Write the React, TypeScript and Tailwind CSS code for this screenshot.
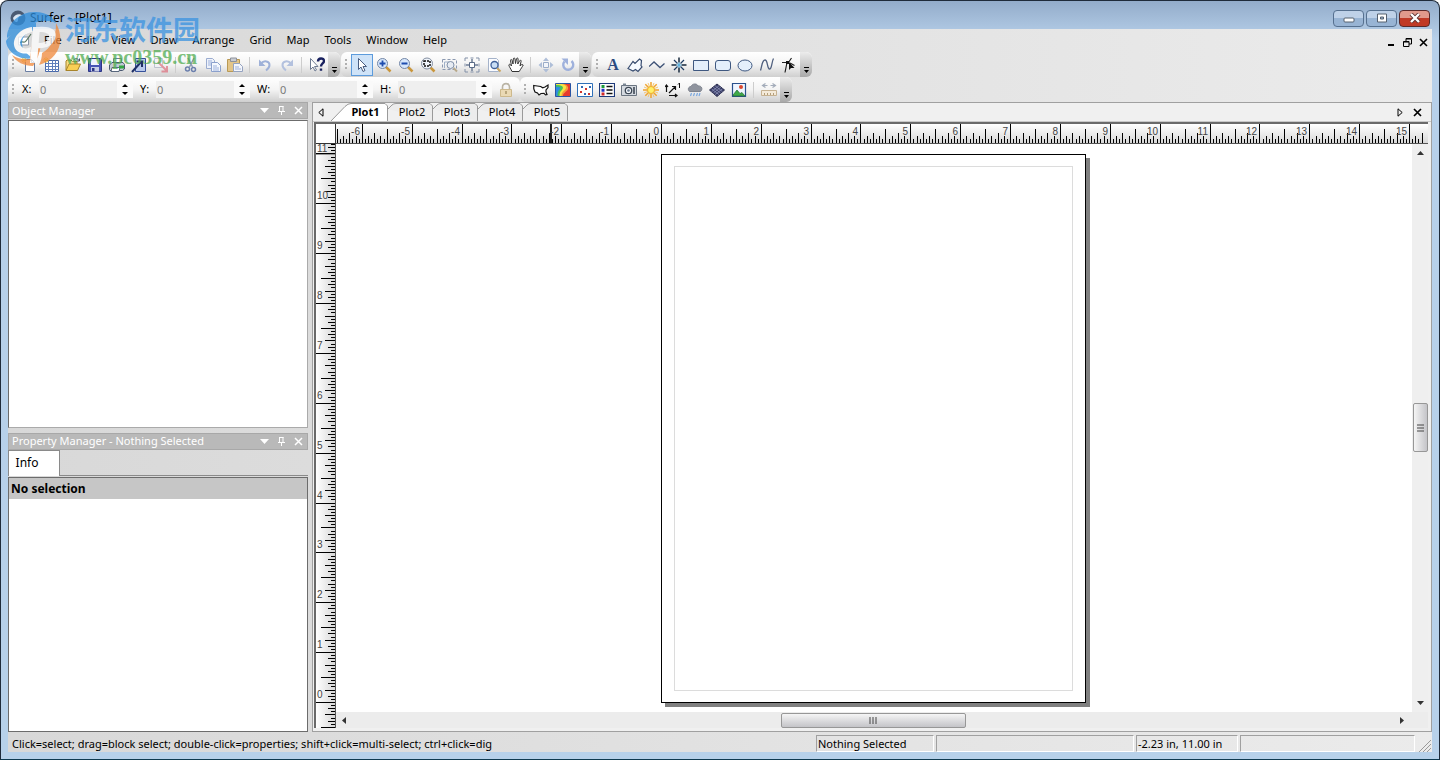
import React from "react";

type IconProps = { children: React.ReactNode; className?: string };

function Icon({ children, className = "" }: IconProps) {
  return (
    <svg viewBox="0 0 16 16" className={`h-4 w-4 shrink-0 ${className}`} fill="none" aria-hidden="true">
      {children}
    </svg>
  );
}

/* ---------- toolbar icons ---------- */
const icons: Record<string, React.ReactNode> = {
  New: (
    <>
      <path d="M4.5 2.5h6l3 3v9h-9z" fill="#fdfdff" stroke="#6b7fa3" />
      <path d="M10.5 2.5v3h3" stroke="#6b7fa3" />
      <path d="M3 0v6M0 3h6M1 1l4 4M5 1L1 5" stroke="#f0d76a" />
    </>
  ),
  Worksheet: (
    <>
      <path d="M2.5 3.5h13v11h-13z" fill="#fff" stroke="#4868a8" />
      <path d="M2.500 6.500h13M2.500 9.500h13M2.500 12.500h13M5.500 3.500v11M9.500 3.500v11M12.500 3.500v11" stroke="#5f7fbc" />
      <path d="M3 0v6M0 3h6M1 1l4 4M5 1L1 5" stroke="#f0d76a" />
    </>
  ),
  Open: (
    <>
      <path d="M1 13.500V4l1-1h4l1.500 1.500H12V7" fill="#f6dc83" stroke="#a8842a" />
      <path d="M1 13.500L4 7h11.500l-3 6.500z" fill="#f9cf55" stroke="#a8842a" />
      <path d="M9 2.500c2-1.500 4-1 5 1m.5-2v2.500H12" stroke="#44506a" />
    </>
  ),
  Save: (
    <>
      <path d="M1.500 1.500h12l1 1v12h-13z" fill="#4753b5" stroke="#2c3685" />
      <path d="M4 2h8v6H4z" fill="#eef2ff" />
      <path d="M4 10h8v4.500H4z" fill="#c7cde6" />
      <path d="M5 11h2.500v3H5z" fill="#2c3685" />
    </>
  ),
  Print: (
    <>
      <path d="M4.500 6V1.500h8V6" fill="#fff" stroke="#6d7c93" />
      <path d="M3 5.500h11l1.500 2v4.500l-2 1.500H1l-.500-1V8z" fill="#c3cad5" stroke="#4a5870" />
      <path d="M3 10.500h8l-1 4H2z" fill="#fff" stroke="#59677d" />
      <path d="M10 8.500h5v3h-5z" fill="#35a843" />
    </>
  ),
  Import: (
    <>
      <path d="M4.500 1.500h10v13h-10z" fill="#b9c9ec" stroke="#35509a" />
      <path d="M1 15l9-10M5.500 4.500h5.500V10" stroke="#1f2f66" strokeWidth="2" />
    </>
  ),
  Export: (
    <g opacity=".6">
      <path d="M1.500 1.500h8v9h-8z" fill="#f4f4f8" stroke="#9ba6bb" />
      <path d="M5 5l9 9M14 9v5.500H8.500" stroke="#dd5a6c" strokeWidth="2" />
    </g>
  ),
  Cut: (
    <>
      <path d="M5 1l4.500 9M11 1L6.500 10" stroke="#8c9ab4" strokeWidth="1.500" />
      <circle cx="4.500" cy="12" r="2" stroke="#6c80ad" strokeWidth="1.500" />
      <circle cx="10.500" cy="12.500" r="2" stroke="#6c80ad" strokeWidth="1.500" />
    </>
  ),
  Copy: (
    <>
      <path d="M1.500 1.500h6l2 2v8h-8z" fill="#eef2fa" stroke="#9bacd0" />
      <path d="M6.500 5.500h6l3 3v6h-9z" fill="#f5f8fd" stroke="#8ba0cc" />
      <path d="M3 4h4M3 6h3M3 8h3M8 9h4M8 11h6M8 13h6" stroke="#9db1dd" />
    </>
  ),
  Paste: (
    <>
      <path d="M.5 2.500h12v12H.5z" fill="#e3c588" stroke="#b99954" />
      <path d="M3.500 1h6v3.500h-6z" fill="#c9ccd3" stroke="#8e929b" />
      <path d="M6.500 6.500h6l3 3v5h-9z" fill="#f4f6fb" stroke="#95a3c0" />
      <path d="M8 10h4M8 12h6" stroke="#9db1dd" />
    </>
  ),
  Undo: (
    <>
      <path d="M4 6.500C7 3 12.500 4 12.500 8c0 2.500-1.500 4-3.500 5.500" stroke="#9fb1d8" strokeWidth="2" />
      <path d="M2 2.500v6.500h6.500z" fill="#9fb1d8" />
    </>
  ),
  Redo: (
    <>
      <path d="M12 6.500C9 3 3.500 4 3.500 8c0 2.500 1.500 4 3.500 5.500" stroke="#b3c1de" strokeWidth="2" />
      <path d="M14 2.500v6.500H7.500z" fill="#b3c1de" />
    </>
  ),
  "Context help": (
    <>
      <path d="M1.500 1.500v11l2.500-2.500 2 4 1.500-1-2-3.500h3.500z" fill="#fff" stroke="#6f7b92" />
      <path d="M9 4.500c0-4 6-4 6-.5 0 2.500-3 2.500-3 5.500M12 11.500v2.300" stroke="#19215f" strokeWidth="2.400" />
    </>
  ),
  Select: <path d="M4.500 1.500v11l2.500-2.500 2 4.500 2-1-2-4h3.500z" fill="#fff" stroke="#4a5d80" />,
  "Zoom in": (
    <>
      <path d="M10 10l4.500 4.500" stroke="#c9963c" strokeWidth="2.500" />
      <circle cx="6.500" cy="6.500" r="5" fill="#d7e7fb" stroke="#7386a6" />
      <path d="M3.500 6.500h6M6.500 3.500v6" stroke="#1d4cae" strokeWidth="1.800" />
    </>
  ),
  "Zoom out": (
    <>
      <path d="M10 10l4.500 4.500" stroke="#c9963c" strokeWidth="2.500" />
      <circle cx="6.500" cy="6.500" r="5" fill="#d7e7fb" stroke="#7386a6" />
      <path d="M3.500 6.500h6" stroke="#1d4cae" strokeWidth="1.800" />
    </>
  ),
  "Zoom rectangle": (
    <>
      <path d="M10.500 10.500l4 4" stroke="#c9963c" strokeWidth="2.500" />
      <circle cx="7" cy="6.500" r="5.500" fill="#eef3fa" stroke="#8590a2" />
      <path d="M4 4h6v5H4z" stroke="#111" strokeWidth="1.500" strokeDasharray="2 1" />
    </>
  ),
  "Zoom selected": (
    <>
      <path d="M.5 2.500h14v10H.5z" stroke="#8b99b0" strokeDasharray="3 2" />
      <path d="M2.500 5V11M2.500 5h5" stroke="#9fb0c8" />
      <path d="M11.500 11l3.500 3.500" stroke="#b8a98a" strokeWidth="2" />
      <circle cx="8.500" cy="8" r="3.500" fill="#e7ecf3" stroke="#8090a8" />
    </>
  ),
  "Fit to window": (
    <>
      <path d="M1 4V1h3M6.500 1h3M12 1h3v3M15 6.500v3M15 12v3h-3M9.500 15h-3M4 15H1v-3M1 9.500v-3" stroke="#8391a8" />
      <path d="M5.500 5.500h5v5h-5z" fill="#fff" stroke="#5a6b87" />
      <path d="M8 2v3M8 11v3M2 8h3M11 8h3" stroke="#6d7c95" strokeWidth="1.500" />
    </>
  ),
  "Zoom page": (
    <>
      <path d="M2.500 1.500h8l2 2v11h-10z" fill="#fbfcff" stroke="#a5b3ca" />
      <path d="M11 11l3.500 3.500" stroke="#c9a560" strokeWidth="2" />
      <circle cx="8.500" cy="8" r="3.500" fill="#c9def6" stroke="#3f6098" strokeWidth="1.300" />
    </>
  ),
  Pan: (
    <path
      d="M4 14.500C3 12 1 9.500.8 8c.4-1.200 1.700-.8 2.700 1L2.500 3.500c0-1.300 1.300-1.300 1.600 0L5 7 5.300 2c.2-1.300 1.600-1.300 1.700 0L7.500 6.500 8.500 1.800c.3-1.200 1.600-1 1.600.2L9.800 7l1.800-3.200c.6-1.100 1.800-.6 1.500.5L12 9c.8-1.300 2.600-2 3.200-1-.6 1.500-2.500 4-4 6.500z"
      fill="#fff"
      stroke="#333"
    />
  ),
  Move: (
    <>
      <path d="M8 .5l3 3.500H5zM8 15.500L5 12h6zM.5 8L4 5v6zM15.500 8L12 5v6z" fill="#aebed8" />
      <path d="M5.500 5.500h5v5h-5z" fill="#f2f5fa" stroke="#9aacc8" />
    </>
  ),
  Rotate: (
    <>
      <path d="M11.500 4a5 5 0 1 1-7 .5" stroke="#9fb1dc" strokeWidth="2.400" />
      <path d="M1.500 1.500H8v6.500z" fill="#9fb1dc" />
    </>
  ),
  Polygon: <path d="M1 11.500l5-7 2 2L12.500 2l2 1.500-.5 5 1 1.500-4 4.500-2.500-2L6 14l-3-1.500z" fill="#f6faff" stroke="#394d70" strokeWidth="1.200" />,
  Polyline: <path d="M0 9.500l5-4.500 6 5.500 4.500-4" stroke="#3f5377" strokeWidth="1.300" />,
  Symbol: (
    <>
      <path d="M8 .5v5M8 10.500v5M.5 8h5M10.500 8h5" stroke="#17283c" strokeWidth="1.500" />
      <path d="M3 3l3.500 3.500M9.500 9.500L13 13M13 3L9.500 6.500M6.500 9.500L3 13" stroke="#1d3c62" strokeWidth="1.200" />
      <path d="M8 5.500v5M5.500 8h5" stroke="#3aa0d8" strokeWidth="1.200" />
    </>
  ),
  Rectangle: <path d="M.5 3.500h15v10H.5z" fill="#e4effb" stroke="#3f5880" />,
  "Rounded rectangle": <rect x=".5" y="3.500" width="15" height="10" rx="2.500" fill="#e4effb" stroke="#3f5880" />,
  Ellipse: <ellipse cx="8" cy="8.500" rx="7" ry="5.500" fill="#e4effb" stroke="#3f5880" />,
  Spline: <path d="M1.500 13.500C3 9 3 3 6 3s2 9 4.500 9S12.500 5 14.500 1.500" stroke="#50607f" strokeWidth="1.300" />,
  Reshape: (
    <>
      <path d="M1 5.500h6.500L10.500 1M6 5.500l-2 10M9 6l4.500 2.500" stroke="#222" strokeWidth="1.200" />
      <path d="M5 4h3v3H5z" fill="#111" />
      <path d="M8 5v8l2-2h3.500z" fill="#111" />
    </>
  ),
  "Lock aspect": (
    <>
      <path d="M4.500 7V5c0-4.500 7-4.500 7 0v2" stroke="#b9b3a4" strokeWidth="1.600" />
      <path d="M2.500 7.500h11v7h-11z" fill="#ead9b4" stroke="#cdb98c" />
      <path d="M8 9v3" stroke="#a8956a" strokeWidth="1.500" />
    </>
  ),
  "Base map": (
    <path d="M.7 3.500l7 1 2 1.300 2.300-.8 3-2V5.500l-2 2.500v2l1 2.500-1.500.3-1.500-1.500-3 .2L6 13l-1.500-2L2 10 .8 7z" fill="#fff" stroke="#111" strokeWidth="1.200" />
  ),
  "Contour map": (
    <>
      <path d="M.5 1.500h15v13H.5z" fill="#e83b2e" stroke="#2a55a4" />
      <path d="M1 2h8c4 1 5 4 3.500 6S8 11 8 14H1z" fill="#f79a3a" />
      <path d="M1 2h6c4 1 5 3 3.500 5S6.500 10 6.500 14H1z" fill="#f4e443" />
      <path d="M1 3c6 0 8 2 6.500 4S4.500 10 4.500 14H1z" fill="#46c05d" />
      <path d="M1 5c4-1 5 1 3.500 2.500S2.500 11 2.500 14H1z" fill="#2d8de0" />
    </>
  ),
  "Post map": (
    <>
      <path d="M.5 1.500h15v13H.5z" fill="#fff" stroke="#2f70b8" />
      <path d="M3 9h2v2H3zM8 6h2v2H8zM11 11h2v2h-2z" fill="#d0342c" />
      <path d="M4 4h2v2H4zM12 4h2v2h-2zM7 11h2v2H7z" fill="#3268b4" />
    </>
  ),
  "Classed post map": (
    <>
      <path d="M.5 1.500h15v13H.5z" fill="#fff" stroke="#1e3a7a" strokeWidth="1.200" />
      <path d="M2.500 3h3v3h-3z" fill="#1c9b3b" />
      <path d="M2.500 6.700h3v3h-3z" fill="#2030c0" />
      <path d="M2.500 10.400h3v3h-3z" fill="#d02a2a" />
      <path d="M7.500 4.500h6M7.500 8h6M7.500 11.500h6" stroke="#111" strokeWidth="1.300" />
    </>
  ),
  "Image map": (
    <>
      <path d="M.5 3.500h15v10H.5z" fill="#d5dae0" stroke="#6a7480" />
      <path d="M2 1.500h3v2H2z" fill="#7b8794" />
      <circle cx="7.500" cy="8.500" r="3.200" fill="#f3f6fa" stroke="#3c4754" strokeWidth="1.300" />
      <circle cx="7.500" cy="8.500" r="1.300" fill="#6a7b90" />
      <path d="M13 5v7" stroke="#333e4c" strokeWidth="1.500" />
    </>
  ),
  "Shaded relief map": (
    <>
      <path d="M8 0v16M0 8h16M2.300 2.300l11.400 11.400M13.700 2.300L2.300 13.700" stroke="#f0a32c" strokeWidth="1.500" />
      <path d="M5 1l6 14M11 1L5 15M1 5l14 6M15 5L1 11" stroke="#f5bb4f" strokeWidth=".8" />
      <circle cx="8" cy="8" r="3.500" fill="#fff06a" stroke="#eeb02f" />
    </>
  ),
  "Vector map": (
    <>
      <path d="M1.500 3v7M0 5l1.500-2L3 5M4 11l6.500-6.500M7 4.500h3.500V8M4 13.500h8M10 12l2 1.500-2 1.500" stroke="#111" strokeWidth="1.200" />
      <path d="M13 2.500L14.500 1v5" stroke="#111" />
    </>
  ),
  "Watershed map": (
    <>
      <path d="M2.500 9.500C0 7 2 4.500 4 4.500 5 1.500 10 1 11 4c4-.5 5 3.500 2.500 5.500z" fill="#8f949e" stroke="#7e838e" />
      <path d="M4.500 11l-1 3M7.500 11l-1 3M10.500 11l-1 3M13 11l-1 3" stroke="#79a7df" strokeWidth="1.200" />
    </>
  ),
  "3D surface": (
    <>
      <path d="M8 2l7.500 6L8 14.500.5 8z" fill="#3a3f68" stroke="#2a2d4d" />
      <path d="M6 3.700l7.500 6M4.200 5.200l7.500 6M2.500 6.700l7.500 6M10 3.700l-7.500 6M11.800 5.200l-7.500 6M13.500 6.700l-7.500 6" stroke="#9297bd" strokeWidth=".7" />
    </>
  ),
  "3D wireframe": (
    <>
      <path d="M1.500 1.500h13v13h-13z" fill="#eef5ff" stroke="#29508c" strokeWidth="1.200" />
      <path d="M2 13l4-5 3 3.500 2-1 3 3.500H2z" fill="#3eaa48" stroke="#256c35" strokeWidth=".7" />
      <circle cx="10" cy="5" r="2" fill="#d9472f" />
    </>
  ),
  "Scale bar": (
    <>
      <path d="M2 3.500h4.500M9.500 3.500H14M4.500 1.500l-3 2 3 2M11.500 1.500l3 2-3 2" stroke="#a3acba" strokeWidth="1.200" />
      <path d="M.5 8.500h15v5H.5z" fill="#f4ead9" stroke="#c6b292" />
      <path d="M3.500 11v2M6.500 11v2M9.500 11v2M12.500 11v2" stroke="#b49e7a" />
    </>
  ),
};

function Tool({ name, active = false }: { name: string; active?: boolean }) {
  return (
    <button
      type="button"
      aria-label={name}
      className={
        active
          ? "flex h-[22px] w-[22px] shrink-0 items-center justify-center border border-[#5c9bdc] bg-[#cfe3f8]"
          : "flex h-[22px] w-[22px] shrink-0 items-center justify-center"
      }
    >
      {name === "Text" ? (
        <span className="font-['Liberation_Serif',serif] text-base leading-4 font-bold text-[#2c4a80]">A</span>
      ) : (
        <Icon>{icons[name]}</Icon>
      )}
    </button>
  );
}

function Grip() {
  return (
    <div className="flex w-[10px] shrink-0 justify-center">
      <svg viewBox="0 0 6 16" className="h-4 w-[6px]" aria-hidden="true">
        <path d="M2 2h2v2H2zM2 6h2v2H2zM2 10h2v2H2z" fill="#b0b0b0" />
      </svg>
    </div>
  );
}

function Separator() {
  return <div className="mr-1 ml-[3px] h-4 w-px shrink-0 bg-[#cdcdcd]" />;
}

function Overflow() {
  return (
    <button
      type="button"
      aria-label="Toolbar options"
      className="flex h-full w-3 shrink-0 items-end justify-center rounded-r-md bg-linear-to-b from-[#ececec] to-[#a9a9a9] pb-[3px]"
    >
      <svg viewBox="0 0 7 7" className="h-[7px] w-[7px]" aria-hidden="true">
        <path d="M1 0h5v1H1zM1 3h5L3.500 6z" fill="#000" />
      </svg>
    </button>
  );
}

function Strip({ label, children }: { label: string; children: React.ReactNode }) {
  return (
    <div
      role="toolbar"
      aria-label={label}
      className="flex h-[25px] items-center rounded-md bg-linear-to-b from-white via-[#f4f4f4] to-[#cfcfcf]"
    >
      {children}
    </div>
  );
}

const coordLabelBox: Record<string, string> = {
  X: "w-[21px] pl-1",
  Y: "w-[23px] pl-[7px]",
  W: "w-[29px] pl-[7px]",
  H: "w-[25px] pl-[7px]",
};

function Coord({ label }: { label: string }) {
  const id = `coord-${label}`;
  return (
    <div className="flex items-center">
      <label htmlFor={id} className={`${coordLabelBox[label]} text-[11px]`}>
        {label}:
      </label>
      <input id={id} defaultValue="0" className="h-[17px] w-[78px] bg-[#efefef] px-px text-[11px] text-[#7a7a7a] outline-none" />
      <div className="flex h-[17px] w-4 flex-col items-center justify-between bg-[#fafafa] py-[3px]">
        <button type="button" aria-label={`Increase ${label}`} className="block">
          <svg viewBox="0 0 6 3" className="h-[3px] w-[6px]"><path d="M0 3l3-3 3 3z" /></svg>
        </button>
        <button type="button" aria-label={`Decrease ${label}`} className="block">
          <svg viewBox="0 0 6 3" className="h-[3px] w-[6px]"><path d="M0 0l3 3 3-3z" /></svg>
        </button>
      </div>
    </div>
  );
}

function PanelHeader({ title }: { title: string }) {
  return (
    <div className="flex h-[17px] shrink-0 items-center border border-[#a8a8a8] bg-[#b9b9b9] pr-1 pl-[3px] text-white">
      <h2 className="flex-1 text-[11px] leading-4 whitespace-nowrap">{title}</h2>
      <div className="flex items-center gap-2">
        <button type="button" aria-label="Panel menu">
          <svg viewBox="0 0 9 9" className="h-[9px] w-[9px]"><path d="M0 2h9L4.500 7z" fill="#fff" /></svg>
        </button>
        <button type="button" aria-label="Pin panel">
          <svg viewBox="0 0 9 9" className="h-[9px] w-[9px]" fill="none" stroke="#fff">
            <path d="M2.500 0v5M2.500.5h4M6 0v5M1 5.500h7M4.500 5.500V9" />
          </svg>
        </button>
        <button type="button" aria-label="Close panel">
          <svg viewBox="0 0 9 9" className="h-[9px] w-[9px]" fill="none" stroke="#fff" strokeWidth="1.500">
            <path d="M1 1l7 7M8 1L1 8" />
          </svg>
        </button>
      </div>
    </div>
  );
}

/* ---------- rulers ---------- */
const UNIT = 49.87;

function tickLength(i: number) {
  const n = ((i % 16) + 16) % 16;
  if (n === 0) return 20;
  if (n === 8) return 14;
  if (n % 4 === 0) return 10;
  if (n % 2 === 0) return 7;
  return 4;
}

function range(from: number, to: number) {
  return Array.from({ length: to - from + 1 }, (_, k) => from + k);
}

function HorizontalRuler() {
  const origin = 325;
  return (
    <svg className="block h-5 min-w-0 flex-1 bg-linear-to-b from-white to-[#d6d6d6]" shapeRendering="crispEdges" aria-label="Horizontal ruler">
      {range(-104, 244).map((i) => {
        const h = tickLength(i);
        return <rect key={i} x={Math.round(origin + (i * UNIT) / 16)} y={19 - h} width="1" height={h} fill="#000" />;
      })}
      <rect x="214" y="0" width="2" height="20" fill="#222" />
      <rect x="0" y="19" width="100%" height="1" fill="#555" />
      {range(-6, 15).map((n) => (
        <text key={n} x={Math.round(origin + n * UNIT) - 2} y="11" textAnchor="end" className="fill-[#444] font-['Liberation_Sans',sans-serif] text-[10px]">
          {n}
        </text>
      ))}
    </svg>
  );
}

function VerticalRuler() {
  const origin = 558;
  return (
    <svg className="block h-full w-5 shrink-0 bg-linear-to-r from-white to-[#d6d6d6]" shapeRendering="crispEdges" aria-label="Vertical ruler">
      {range(-10, 180).map((i) => {
        const w = tickLength(i);
        return <rect key={i} x={19 - w} y={Math.round(origin - (i * UNIT) / 16)} width={w} height="1" fill="#000" />;
      })}
      <rect x="0" y="10" width="20" height="1" fill="#999" />
      <rect x="19" y="0" width="1" height="100%" fill="#555" />
      {range(0, 11).map((n) => (
        <text key={n} x="1" y={Math.max(Math.round(origin - n * UNIT) - 4, 8)} className="fill-[#444] font-['Liberation_Sans',sans-serif] text-[10px]">
          {n}
        </text>
      ))}
    </svg>
  );
}

function PlotTab({ name, active = false }: { name: string; active?: boolean }) {
  return (
    <button
      type="button"
      role="tab"
      aria-selected={active}
      className={
        active
          ? "relative h-[18px] w-[57px] pt-px pl-3 text-[11px] font-bold"
          : "relative h-[18px] w-[45px] pt-px pl-[3px] text-[11px]"
      }
    >
      {active ? (
        <svg viewBox="0 0 57 18" className="absolute inset-0 h-[18px] w-[57px]" fill="#fff" stroke="#9a9a9a">
          <path d="M0 18L14 3.500Q17 .5 20 .5H54L56.500 3V18" />
        </svg>
      ) : (
        <svg viewBox="0 0 45 18" className="absolute inset-0 h-[18px] w-[45px]" fill="#ececec" stroke="#9a9a9a">
          <path d="M0 6L4 2Q5.500 .5 8 .5H42L44.500 3V18" />
        </svg>
      )}
      <span className="relative">{name}</span>
    </button>
  );
}

function WindowButton({ name, danger = false, children }: { name: string; danger?: boolean; children: React.ReactNode }) {
  return (
    <button
      type="button"
      aria-label={name}
      className={
        danger
          ? "flex h-[17px] w-[31px] items-center justify-center rounded-sm border border-[#5b2a2a] bg-linear-to-b from-[#e19a8c] from-50% to-[#c03a26] to-50%"
          : "flex h-[17px] w-[31px] items-center justify-center rounded-sm border border-[#56708f] bg-linear-to-b from-[#bed1e8] from-50% to-[#98b4d4] to-50%"
      }
    >
      {children}
    </button>
  );
}

function Watermark() {
  return (
    <div className="pointer-events-none absolute top-[8px] left-[4px] z-10 flex opacity-75">
      <svg viewBox="0 0 60 60" className="h-[60px] w-[60px]" aria-hidden="true">
        <path d="M2 29C2 14 15 2 31 3c10 0 17 5 20 11-8-3-16-3-23 1C16 19 7 25 2 29z" fill="#2f8fdd" />
        <path d="M1 32C7 22 18 14 31 14v7c-8 1-14 6-14 13 0 6 4 11 11 15C16 52 2 44 1 32z" fill="#2f8fdd" />
        <path d="M51 14c10 18 2 37-17 42 2-4 3-8 3-12 9-5 14-14 14-30zM7 46c6 4 12 5 18 4l2-15h9c-1 9-4 16-8 22-9 0-17-4-21-11z" fill="#f0883a" />
        <path d="M28 18h7l-3 36h-7zM34 18c13-1 19 4 16 12-3 7-10 10-18 9l1-5c6 0 10-2 11-6 1-3-3-5-10-5zM27 23c-9 2-14 9-11 14 2 3 6 3 10 1l-1 6c-8 2-15-1-16-8-1-9 8-17 18-18z" fill="#fff" />
      </svg>
      <div className="flex flex-col pt-1 whitespace-nowrap">
        <span className="font-['Noto_Sans_CJK_SC',sans-serif] text-[27px] leading-8 font-bold text-[#3b93e0]">河东软件园</span>
        <span className="font-['Liberation_Serif',serif] text-xl leading-6 font-bold text-[#52ad52]">www.pc0359.cn</span>
      </div>
    </div>
  );
}

const menus = ["File", "Edit", "View", "Draw", "Arrange", "Grid", "Map", "Tools", "Window", "Help"];

export default function App() {
  return (
    <div className="relative flex h-screen flex-col overflow-hidden rounded-t-lg border border-[#1f2b3a] border-b-[#0f3a50] bg-linear-to-b from-[#93acca] via-[#b7d0ea] via-5% to-[#b7d1ea] px-[7px] pb-[7px] font-['Noto_Sans','Open_Sans',sans-serif] text-[11px] text-black">
      <Watermark />

      <header className="flex h-7 shrink-0 items-center pt-[6px] pr-[2px]">
        <svg viewBox="0 0 16 16" className="ml-[2px] h-4 w-4" aria-hidden="true">
          <circle cx="8" cy="8" r="7.500" fill="#4a5a72" />
          <path d="M3 8c2-4 7-5 10-2-3-.5-5 1-5 4s-4 3-5-2z" fill="#d9e5f2" />
        </svg>
        <h1 className="ml-1 flex-1 text-xs whitespace-nowrap">Surfer - [Plot1]</h1>
        <div className="flex gap-[2px]">
          <WindowButton name="Minimize">
            <svg viewBox="0 0 12 10" className="h-[10px] w-3"><rect x="1" y="5" width="10" height="4" rx="1" fill="#fff" stroke="#55606e" /></svg>
          </WindowButton>
          <WindowButton name="Maximize">
            <svg viewBox="0 0 12 10" className="h-[10px] w-3"><path d="M1.500 1h9v8h-9z" fill="#fff" stroke="#55606e" /><path d="M4.500 4h3v2h-3z" fill="#9db5d0" stroke="#55606e" /></svg>
          </WindowButton>
          <WindowButton name="Close" danger>
            <svg viewBox="0 0 12 10" className="h-[10px] w-3"><path d="M2 1l8 8M10 1L2 9" stroke="#5b3030" strokeWidth="4" /><path d="M2 1l8 8M10 1L2 9" stroke="#fff" strokeWidth="2.400" /></svg>
          </WindowButton>
        </div>
      </header>

      <div className="flex min-h-0 flex-1 flex-col bg-linear-to-r from-[#d8d8d8] to-[#ebebeb]">
        <nav className="flex h-[23px] shrink-0 items-center pb-px" aria-label="Main menu">
          <svg viewBox="0 0 16 16" className="mr-1 ml-[9px] h-4 w-4" fill="none" aria-hidden="true">
            <path d="M1.500 5h10v8h-10z" fill="#fff" stroke="#8b97a8" />
            <path d="M3 11c2-3 4 1 6-2l5-7" stroke="#54735d" strokeWidth="1.200" />
          </svg>
          <ul className="flex flex-1 gap-px">
            {menus.map((m) => (
              <li key={m}>
                <button type="button" className="px-[7px] text-[11px] leading-4">{m}</button>
              </li>
            ))}
          </ul>
          <div className="mr-1 flex items-center gap-[7px] pt-1">
            <button type="button" aria-label="Minimize document">
              <svg viewBox="0 0 9 9" className="h-[9px] w-[9px]"><path d="M1 6h6v2H1z" /></svg>
            </button>
            <button type="button" aria-label="Restore document">
              <svg viewBox="0 0 9 9" className="h-[9px] w-[9px]" fill="none" stroke="#000"><path d="M3 3V.5h5.500V6H6M3 1h5.500M.5 3.500H6v5H.5zM.5 4H6" /></svg>
            </button>
            <button type="button" aria-label="Close document">
              <svg viewBox="0 0 9 9" className="h-[9px] w-[9px]" stroke="#000" strokeWidth="1.600"><path d="M1 1l7 7M8 1L1 8" /></svg>
            </button>
          </div>
        </nav>

        <div className="flex h-[25px] shrink-0 gap-px">
          <Strip label="Standard">
            <Grip />
            {["New", "Worksheet", "Open", "Save", "Print", "Import", "Export"].map((n) => <Tool key={n} name={n} />)}
            <Separator />
            {["Cut", "Copy", "Paste"].map((n) => <Tool key={n} name={n} />)}
            <Separator />
            {["Undo", "Redo"].map((n) => <Tool key={n} name={n} />)}
            <Separator />
            <Tool name="Context help" />
            <Overflow />
          </Strip>
          <Strip label="View">
            <Grip />
            <Tool name="Select" active />
            {["Zoom in", "Zoom out", "Zoom rectangle", "Zoom selected", "Fit to window", "Zoom page", "Pan"].map((n) => <Tool key={n} name={n} />)}
            <Separator />
            {["Move", "Rotate"].map((n) => <Tool key={n} name={n} />)}
            <Overflow />
          </Strip>
          <Strip label="Draw">
            <Grip />
            {["Text", "Polygon", "Polyline", "Symbol", "Rectangle", "Rounded rectangle", "Ellipse", "Spline", "Reshape"].map((n) => <Tool key={n} name={n} />)}
            <Overflow />
          </Strip>
        </div>

        <div className="flex h-[25px] shrink-0">
          <Strip label="Position and size">
            <Grip />
            {["X", "Y", "W", "H"].map((l) => <Coord key={l} label={l} />)}
            <div className="px-[3px]"><Tool name="Lock aspect" /></div>
          </Strip>
          <Strip label="Map">
            <Grip />
            {["Base map", "Contour map", "Post map", "Classed post map", "Image map", "Shaded relief map", "Vector map", "Watershed map", "3D surface", "3D wireframe"].map((n) => <Tool key={n} name={n} />)}
            <Separator />
            <Tool name="Scale bar" />
            <Overflow />
          </Strip>
        </div>

        <div className="flex min-h-0 flex-1">
          <aside className="flex w-[300px] shrink-0 flex-col">
            <PanelHeader title="Object Manager" />
            <div className="mt-px min-h-0 flex-[307] border border-[#6c6c6c] border-r-[#aaa] border-b-[#aaa] bg-white" />
            <div className="mt-[5px] flex min-h-0 flex-[300] flex-col">
              <PanelHeader title="Property Manager - Nothing Selected" />
              <div className="flex h-[26px] shrink-0 border-b border-[#8a8a8a]" role="tablist">
                <button type="button" role="tab" aria-selected="true" className="h-[26px] w-[52px] border border-b-0 border-[#8a8a8a] bg-white pr-[14px] text-xs">
                  Info
                </button>
              </div>
              <div className="mt-px min-h-0 flex-1 border border-[#6c6c6c] bg-white">
                <h3 className="h-[21px] bg-[#c6c6c6] pl-[2px] text-xs leading-[21px] font-bold">No selection</h3>
              </div>
            </div>
          </aside>

          <main className="ml-1 flex min-w-0 flex-1 flex-col border border-[#a0a0a0] bg-[#f0f0f0]">
            <div className="flex h-[19px] shrink-0 items-end border-b border-[#c8c8c8]">
              <button type="button" aria-label="Scroll tabs left" className="mb-1 ml-[5px]">
                <svg viewBox="0 0 6 9" className="h-[9px] w-[6px]" fill="none" stroke="#000"><path d="M5 .8v7.400L.8 4.500z" /></svg>
              </button>
              <div role="tablist" className="ml-[7px] flex flex-1">
                <PlotTab name="Plot1" active />
                {["Plot2", "Plot3", "Plot4", "Plot5"].map((t) => <PlotTab key={t} name={t} />)}
              </div>
              <div className="mr-[9px] mb-1 flex items-center gap-[10px]">
                <button type="button" aria-label="Scroll tabs right">
                  <svg viewBox="0 0 6 9" className="h-[9px] w-[6px]" fill="none" stroke="#000"><path d="M1 .8v7.400L5.200 4.500z" /></svg>
                </button>
                <button type="button" aria-label="Close tab">
                  <svg viewBox="0 0 9 9" className="h-[9px] w-[9px]" stroke="#000" strokeWidth="1.700"><path d="M1 1l7 7M8 1L1 8" /></svg>
                </button>
              </div>
            </div>

            <div className="mr-[3px] mb-[3px] ml-px flex min-h-0 flex-1 flex-col border-t-2 border-l-2 border-[#6a6a6a]">
              <div className="flex h-5 shrink-0">
                <div className="h-5 w-5 shrink-0 border-r border-b border-[#333] bg-white" />
                <HorizontalRuler />
              </div>
              <div className="flex min-h-0 flex-1">
                <VerticalRuler />
                <div className="flex min-w-0 flex-1 flex-col">
                  <div className="flex min-h-0 flex-1">
                    <div className="relative min-w-0 flex-1 overflow-hidden bg-white">
                      <div className="absolute top-[10px] left-[325px] h-[549px] w-[425px] border border-black bg-white px-3 py-[11px] shadow-[4px_4px_0_0_#808080]">
                        <div className="h-full border border-[#dcdcdc]" />
                      </div>
                    </div>
                    <div className="flex w-4 shrink-0 flex-col items-center bg-[#efefef] py-[7px]">
                      <svg viewBox="0 0 7 4" className="h-1 w-[7px]"><path d="M0 4l3.500-4L7 4z" fill="#333" /></svg>
                      <div className="flex-[248]" />
                      <div className="flex h-[49px] w-[15px] items-center justify-center rounded-xs border border-[#979797] bg-linear-to-r from-[#f5f5f5] to-[#c4c4c8]">
                        <svg viewBox="0 0 7 8" className="h-2 w-[7px]"><path d="M0 1h7M0 4h7M0 7h7" stroke="#444" /></svg>
                      </div>
                      <div className="flex-[249]" />
                      <svg viewBox="0 0 7 4" className="h-1 w-[7px]"><path d="M0 0l3.500 4L7 0z" fill="#333" /></svg>
                    </div>
                  </div>
                  <div className="flex h-4 shrink-0 items-center bg-[#ececec] pr-6 pl-[6px]">
                    <svg viewBox="0 0 4 7" className="h-[7px] w-1"><path d="M4 0L0 3.500 4 7z" fill="#333" /></svg>
                    <div className="flex-1" />
                    <div className="flex h-[15px] w-[185px] items-center justify-center rounded-xs border border-[#979797] bg-linear-to-b from-[#f5f5f5] to-[#c4c4c8]">
                      <svg viewBox="0 0 8 7" className="h-[7px] w-2"><path d="M1 0v7M4 0v7M7 0v7" stroke="#444" /></svg>
                    </div>
                    <div className="flex-1" />
                    <svg viewBox="0 0 4 7" className="h-[7px] w-1"><path d="M0 0l4 3.500L0 7z" fill="#333" /></svg>
                  </div>
                </div>
              </div>
            </div>
          </main>
        </div>

        <footer className="flex h-5 shrink-0 items-center gap-[2px] pt-[3px] pr-px pl-1 text-[11px] leading-4">
          <p className="min-w-0 flex-1 truncate">Click=select; drag=block select; double-click=properties; shift+click=multi-select; ctrl+click=dig</p>
          <p className="h-[17px] w-[118px] border border-[#a0a0a0] border-r-white border-b-white pl-px whitespace-nowrap">Nothing Selected</p>
          <p className="h-[17px] w-[198px] border border-[#a0a0a0] border-r-white border-b-white" />
          <p className="h-[17px] w-[102px] border border-[#a0a0a0] border-r-white border-b-white pl-px whitespace-nowrap">-2.23 in, 11.00 in</p>
          <p className="h-[17px] w-[175px] border border-[#a0a0a0] border-r-white border-b-white" />
          <svg viewBox="0 0 14 16" className="h-4 w-[14px]" stroke="#999" aria-hidden="true"><path d="M2 16L14 4M6 16l8-8M10 16l4-4" /></svg>
        </footer>
      </div>
    </div>
  );
}
